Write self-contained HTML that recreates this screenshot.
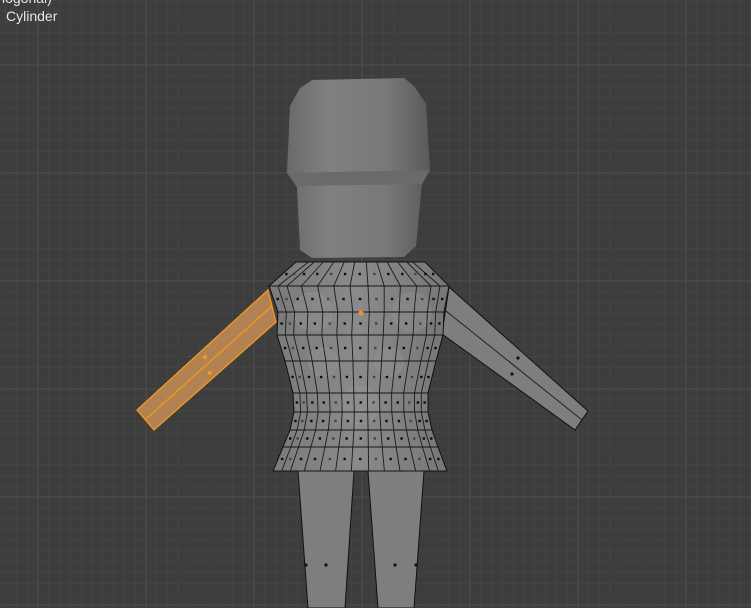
<!DOCTYPE html>
<html><head><meta charset="utf-8"><style>
html,body{margin:0;padding:0;background:#3d3d3d;width:751px;height:608px;overflow:hidden}
svg{position:absolute;left:0;top:0}
.lbl{position:absolute;left:6px;top:8px;color:#e6e6e6;font:14px "Liberation Sans",sans-serif}
.lbl0{position:absolute;left:2px;top:-10px;color:#e6e6e6;font:14px "Liberation Sans",sans-serif}
</style></head><body>
<svg id="s" width="751" height="608" viewBox="0 0 751 608">
<defs>
<linearGradient id="hg" x1="0" x2="1" y1="0" y2="0">
<stop offset="0" stop-color="#6a6a6a"/><stop offset="0.3" stop-color="#808080"/><stop offset="0.7" stop-color="#787878"/><stop offset="1" stop-color="#5a5a5a"/>
</linearGradient>
<linearGradient id="tg" x1="0" x2="1" y1="0" y2="0">
<stop offset="0" stop-color="#7a7a7a"/><stop offset="0.5" stop-color="#8a8a8a"/><stop offset="1" stop-color="#767676"/>
</linearGradient>
</defs>
<g id="grid"></g>
<polygon points="298,471 354,471 345,608 308,608" fill="#7e7e7e" stroke="#111" stroke-width="1"/>
<polygon points="368,471 424,471 414,608 378,608" fill="#7e7e7e" stroke="#111" stroke-width="1"/>
<path d="M312,80 L404,78 L414,86 L426,104 L430,170 L422,183 L416,246 L404,257 L312,258 L300,250 L297,187 L287,173 L290,106 L300,88 Z" fill="url(#hg)"/>
<path d="M289,173 L430,170 L422,184 L296,186 Z" fill="#6a6a6a"/>
<polygon points="449,287 442,334 575,430 588,411" fill="#7e7e7e" stroke="#111" stroke-width="1"/>
<line x1="446" y1="311" x2="582" y2="420" stroke="#222" stroke-width="1"/>
<g id="torso"></g>
<polygon points="268,290 276,322 154,430 137,410" fill="#b88654" fill-opacity="0.95" stroke="#f29a1e" stroke-width="1.3"/>
<line x1="272" y1="306" x2="145" y2="420" stroke="#f29a1e" stroke-width="1.2"/>
<circle cx="205" cy="357" r="2" fill="#f29a1e"/><circle cx="210" cy="373" r="2" fill="#f29a1e"/>
<circle cx="361" cy="313" r="2.5" fill="#f5921e"/>
<circle cx="518" cy="358" r="1.6" fill="#111"/><circle cx="512" cy="374" r="1.6" fill="#111"/>
<circle cx="306" cy="565" r="1.6" fill="#111"/><circle cx="326" cy="565" r="1.6" fill="#111"/>
<circle cx="395" cy="565" r="1.6" fill="#111"/><circle cx="416" cy="565" r="1.6" fill="#111"/>
</svg>
<div class="lbl0">logonal)</div>
<div class="lbl">Cylinder</div>
<script>
var ns="http://www.w3.org/2000/svg";
function el(p,n,a){var e=document.createElementNS(ns,n);for(var k in a)e.setAttribute(k,a[k]);p.appendChild(e);return e;}
var g=document.getElementById("grid");
var m=10.8;
for(var i=-4;i<80;i++){var x=38+i*m;if(x<0||x>751)continue;var maj=(i%10==0);el(g,"line",{x1:x,y1:0,x2:x,y2:608,stroke:maj?"#4e4e4e":"#444444","stroke-width":1});}
for(var i=-7;i<60;i++){var y=65+i*m;if(y<0||y>608)continue;var maj=(i%10==0);el(g,"line",{x1:0,y1:y,x2:751,y2:y,stroke:maj?"#4e4e4e":"#444444","stroke-width":1});}
var rows=[[262,296,425],[286,269,449],[312,278,444],[335,277,443],[361,285,436],[393,293,428],[412,294,428],[430,290,432],[447,283,438],[471,273,447]];
var t=document.getElementById("torso");
var pts=[];rows.forEach(function(r){pts.push(r[1]+","+r[0]);});
for(var i=rows.length-1;i>=0;i--)pts.push(rows[i][2]+","+rows[i][0]);
el(t,"polygon",{points:pts.join(" "),fill:"url(#tg)",stroke:"#111","stroke-width":1});
[[313,312,19],[412,312,19],[323,362,14],[389,362,14],[360,405,19]].forEach(function(c){el(t,"circle",{cx:c[0],cy:c[1],r:c[2],fill:"#9a9a9a","fill-opacity":0.25,stroke:"#999","stroke-opacity":0.5});});
rows.forEach(function(r,i){if(i>0)el(t,"line",{x1:r[1],y1:r[0],x2:r[2],y2:r[0],stroke:"#151515","stroke-width":1});});
var cols=[0.05,0.1,0.18,0.27,0.36,0.45,0.55,0.64,0.73,0.82,0.9,0.95];
cols.forEach(function(f){var p=[];rows.forEach(function(r,i){var ff=f;if(i==0)ff=0.5+(f-0.5)*0.9;p.push((r[1]+ff*(r[2]-r[1])).toFixed(1)+","+r[0]);});
el(t,"polyline",{points:p.join(" "),fill:"none",stroke:"#1a1a1a","stroke-width":0.9});});
for(var i=0;i<rows.length-1;i++){var a=rows[i],b=rows[i+1];var y=(a[0]+b[0])/2;var xl=(a[1]+b[1])/2,xr=(a[2]+b[2])/2;
var ed=[0].concat(cols).concat([1]);
for(var j=0;j<ed.length-1;j++){var f=(ed[j]+ed[j+1])/2;var x=xl+f*(xr-xl);var c=(j%3==1)?"#444":"#0d0d0d";el(t,"rect",{x:x-1.2,y:y-1.2,width:2.4,height:2.4,fill:c});}}
</script>
</body></html>
